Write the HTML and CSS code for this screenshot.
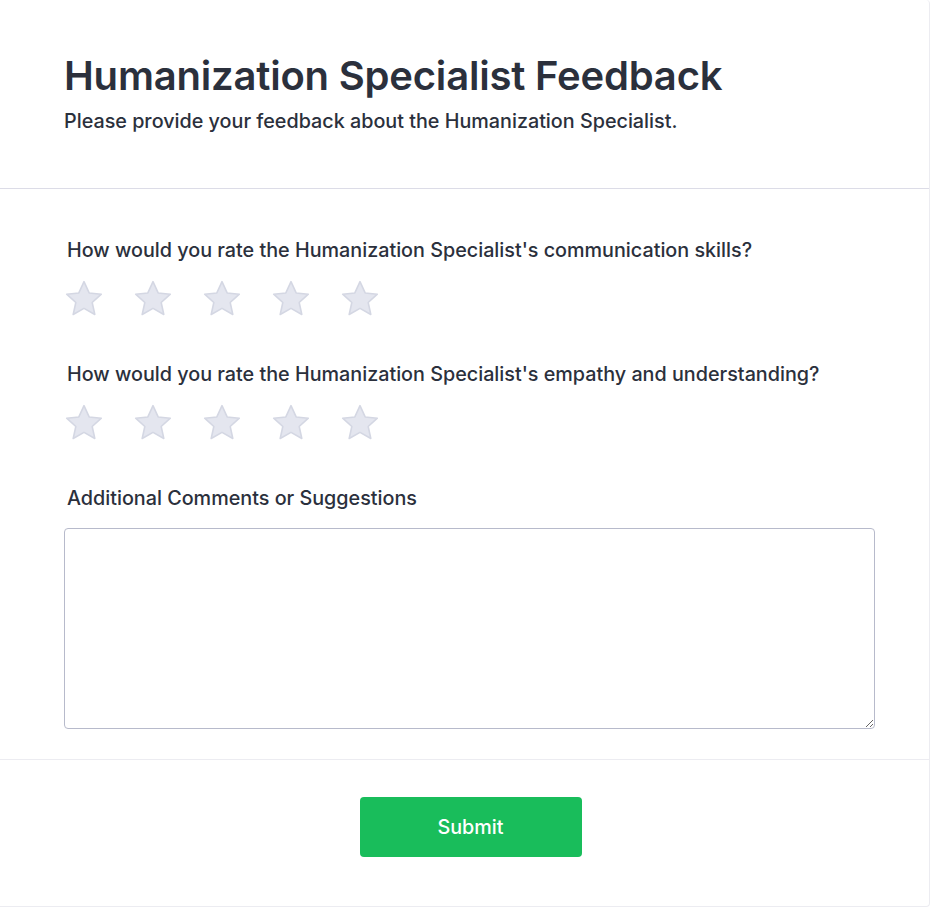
FILE: index.html
```html
<!DOCTYPE html>
<html lang="en">
<head>
<meta charset="utf-8">
<title>Humanization Specialist Feedback</title>
<link rel="stylesheet" href="styles.css">
</head>
<body>
<div class="card">
  <header class="head">
    <h1 class="title">Humanization Specialist Feedback</h1>
    <p class="subtitle">Please provide your feedback about the Humanization Specialist.</p>
  </header>
  <main class="body">
    <section class="question">
      <h2 class="q-title">How would you rate the Humanization Specialist's communication skills?</h2>
      <div class="stars">
        <svg class="star" viewBox="0 0 40 40"><path d="M20 3.5 L24.9 14.2 L36.5 15.4 L27.8 23.3 L30.3 34.8 L20 28.9 L9.7 34.8 L12.2 23.3 L3.5 15.4 L15.1 14.2 Z"/></svg>
        <svg class="star" viewBox="0 0 40 40"><path d="M20 3.5 L24.9 14.2 L36.5 15.4 L27.8 23.3 L30.3 34.8 L20 28.9 L9.7 34.8 L12.2 23.3 L3.5 15.4 L15.1 14.2 Z"/></svg>
        <svg class="star" viewBox="0 0 40 40"><path d="M20 3.5 L24.9 14.2 L36.5 15.4 L27.8 23.3 L30.3 34.8 L20 28.9 L9.7 34.8 L12.2 23.3 L3.5 15.4 L15.1 14.2 Z"/></svg>
        <svg class="star" viewBox="0 0 40 40"><path d="M20 3.5 L24.9 14.2 L36.5 15.4 L27.8 23.3 L30.3 34.8 L20 28.9 L9.7 34.8 L12.2 23.3 L3.5 15.4 L15.1 14.2 Z"/></svg>
        <svg class="star" viewBox="0 0 40 40"><path d="M20 3.5 L24.9 14.2 L36.5 15.4 L27.8 23.3 L30.3 34.8 L20 28.9 L9.7 34.8 L12.2 23.3 L3.5 15.4 L15.1 14.2 Z"/></svg>
      </div>
    </section>
    <section class="question">
      <h2 class="q-title">How would you rate the Humanization Specialist's empathy and understanding?</h2>
      <div class="stars">
        <svg class="star" viewBox="0 0 40 40"><path d="M20 3.5 L24.9 14.2 L36.5 15.4 L27.8 23.3 L30.3 34.8 L20 28.9 L9.7 34.8 L12.2 23.3 L3.5 15.4 L15.1 14.2 Z"/></svg>
        <svg class="star" viewBox="0 0 40 40"><path d="M20 3.5 L24.9 14.2 L36.5 15.4 L27.8 23.3 L30.3 34.8 L20 28.9 L9.7 34.8 L12.2 23.3 L3.5 15.4 L15.1 14.2 Z"/></svg>
        <svg class="star" viewBox="0 0 40 40"><path d="M20 3.5 L24.9 14.2 L36.5 15.4 L27.8 23.3 L30.3 34.8 L20 28.9 L9.7 34.8 L12.2 23.3 L3.5 15.4 L15.1 14.2 Z"/></svg>
        <svg class="star" viewBox="0 0 40 40"><path d="M20 3.5 L24.9 14.2 L36.5 15.4 L27.8 23.3 L30.3 34.8 L20 28.9 L9.7 34.8 L12.2 23.3 L3.5 15.4 L15.1 14.2 Z"/></svg>
        <svg class="star" viewBox="0 0 40 40"><path d="M20 3.5 L24.9 14.2 L36.5 15.4 L27.8 23.3 L30.3 34.8 L20 28.9 L9.7 34.8 L12.2 23.3 L3.5 15.4 L15.1 14.2 Z"/></svg>
      </div>
    </section>
    <section class="question">
      <h2 class="q-title">Additional Comments or Suggestions</h2>
      <textarea class="comments"></textarea>
    </section>
  </main>
  <footer class="foot">
    <button class="submit" type="button">Submit</button>
  </footer>
</div>
</body>
</html>
```

FILE: styles.css
```css
* { box-sizing: border-box; }
html, body { margin: 0; padding: 0; background: #ffffff; }
body {
  font-family: Inter, "Noto Sans", "Liberation Sans", sans-serif;
  color: #2b303c;
}
.card {
  width: 930px;
  height: 907px;
  border-right: 1px solid #ececf1;
  border-bottom: 1px solid #ececf1;
  border-top-right-radius: 4px;
  border-bottom-right-radius: 4px;
  display: flex;
  flex-direction: column;
}
.head {
  height: 189px;
  padding: 52px 0 0 64px;
  border-bottom: 1px solid #dcdce7;
}
.title {
  margin: 0;
  font-size: 40px;
  line-height: 48px;
  font-weight: 600;
  color: #2b303c;
  letter-spacing: -0.2px;
}
.subtitle {
  margin: 7px 0 0;
  font-size: 19.75px;
  line-height: 28px;
  font-weight: 500;
  color: #2b303c;
}
.body {
  height: 571px;
  padding: 47px 55px 0 64px;
  border-bottom: 1px solid #ececf1;
}
.question { margin-bottom: 40px; }
.question:last-child { margin-bottom: 0; }
.q-title {
  margin: 0 0 0 3px;
  font-size: 19.75px;
  line-height: 28px;
  font-weight: 500;
  color: #2b303c;
}
.stars {
  display: flex;
  gap: 27px;
  margin-top: 14px;
  padding-left: 1px;
}
.star {
  width: 42px;
  height: 42px;
  margin-left: -2px;
  fill: #e4e6ef;
  stroke: #d4d7e3;
  stroke-width: 1.5;
  stroke-linejoin: round;
}
.stars .star + .star { margin-left: 0; }
.comments {
  display: block;
  width: 811px;
  height: 201px;
  margin-top: 16px;
  border: 1px solid #b7bacb;
  border-radius: 4px;
  font-family: inherit;
  font-size: 16px;
  padding: 8px;
  background: #fff;
}
.foot {
  flex: 1;
  display: flex;
  justify-content: center;
  align-items: flex-start;
  padding: 37px 0 0 12px;
}
.submit {
  width: 222px;
  height: 60px;
  border: none;
  border-radius: 4px;
  background: #19bd5b;
  color: #ffffff;
  font-family: inherit;
  font-size: 19.75px;
  font-weight: 500;
  cursor: pointer;
}
```
